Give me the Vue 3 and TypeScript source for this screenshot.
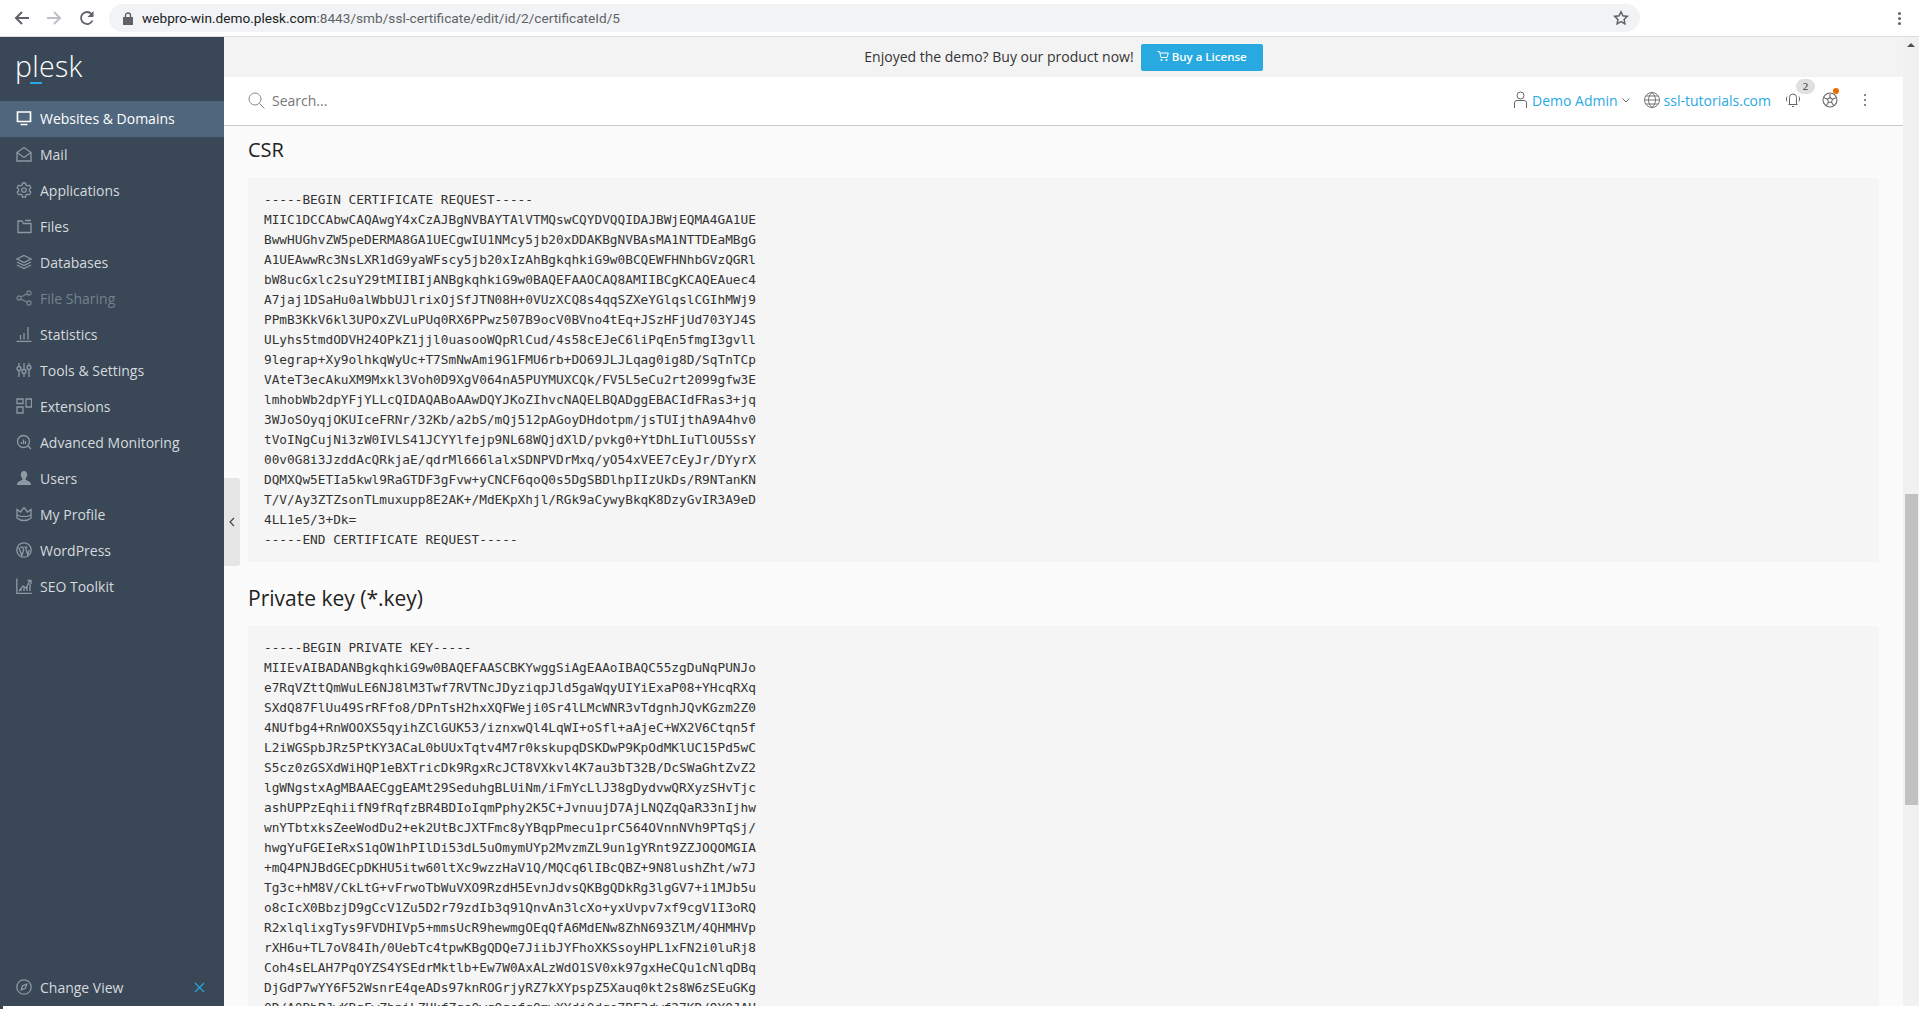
<script setup lang="ts">
interface NavItem { label: string; d: string; fill?: boolean; active?: boolean; dim?: boolean }

const nav: NavItem[] = [
  { label: 'Websites & Domains', active: true, d: 'M1.500 2h13v9.500h-13z M4.500 14.500h7' },
  { label: 'Mail', d: 'M1 6.500L8 1.500l7 5V15H1z M1 6.500l7 5 7-5' },
  { label: 'Applications', d: 'M6.500 1h3l.4 2 1.600.9 1.900-.7 1.500 2.600-1.500 1.300v1.800l1.500 1.300-1.500 2.600-1.900-.7-1.600.9-.4 2h-3l-.4-2-1.600-.9-1.900.7-1.500-2.600 1.500-1.300V7.100L1.100 5.800l1.500-2.600 1.900.7 1.600-.9z M8 5.800a2.200 2.200 0 1 0 0 4.400a2.200 2.200 0 1 0 0-4.400z' },
  { label: 'Files', d: 'M2 3h4l1.500 2.500H15V14.500H2z M9 2.500h6' },
  { label: 'Databases', d: 'M8 1.500l7 3.500-7 3.500-7-3.500z M1 8l7 3.500L15 8 M1 11l7 3.500 7-3.500' },
  { label: 'File Sharing', dim: true, d: 'M4.500 7.200l6.800-3.600 M4.500 8.800l6.800 3.600 M3 6a2 2 0 1 0 0 4a2 2 0 1 0 0-4z M13 1a2 2 0 1 0 0 4a2 2 0 1 0 0-4z M13 11a2 2 0 1 0 0 4a2 2 0 1 0 0-4z' },
  { label: 'Statistics', d: 'M.5 15.500h15 M4.500 9v4.500 M8 7v6.500 M12 1v12.500' },
  { label: 'Tools & Settings', d: 'M3 1v3.500 M3 8.500V15 M8 1v6.500 M8 11.500V15 M13 1v2.500 M13 7.500V15 M3 4.500a2 2 0 1 0 0 4a2 2 0 1 0 0-4z M8 7.500a2 2 0 1 0 0 4a2 2 0 1 0 0-4z M13 3.500a2 2 0 1 0 0 4a2 2 0 1 0 0-4z' },
  { label: 'Extensions', d: 'M1 1h6v4.500H1z M1 9h6v6H1z M10 1h5.500v8H10z' },
  { label: 'Advanced Monitoring', d: 'M7.500 1.500a6 6 0 1 0 0 12a6 6 0 1 0 0-12z M12 12l3 3 M5.500 10V8 M7.500 10V5.500 M9.500 10V7' },
  { label: 'Users', fill: true, d: 'M8 1a3.200 3.200 0 0 1 3.200 3.500c0 2-1 3.500-1.700 4.300 0 1 .7 1.500 2 2 1.800.7 3.500 1.500 3.500 4.200H1c0-2.700 1.700-3.500 3.500-4.200 1.300-.5 2-1 2-2C5.800 8 4.800 6.500 4.800 4.500A3.200 3.200 0 0 1 8 1z' },
  { label: 'My Profile', d: 'M1 3.500L4.500 6 8 1.500 11.500 6 15 3.500V12c-2 2-4.500 2.500-7 2.500S3 14 1 12z M1 9c4 2 10 2 14 0' },
  { label: 'WordPress', d: 'M8 .8a7.200 7.200 0 1 0 0 14.400a7.200 7.200 0 1 0 0-14.400z M2.800 5.500l3 8 1.900-5.500-1-2.500 M4 5.200h3.500 M8.500 5.200h3 M9.500 5.200l2.200 7.800 1.500-5' },
  { label: 'SEO Toolkit', d: 'M.8 .5v15h15 M3 13l4-5 3 2 4-7.500 M11.500 2.500H15V6 M5 13v-3 M8 13v-3.500 M11 13V8 M14 13V6' },
]

const csr = `-----BEGIN CERTIFICATE REQUEST-----
MIIC1DCCAbwCAQAwgY4xCzAJBgNVBAYTAlVTMQswCQYDVQQIDAJBWjEQMA4GA1UE
BwwHUGhvZW5peDERMA8GA1UECgwIU1NMcy5jb20xDDAKBgNVBAsMA1NTTDEaMBgG
A1UEAwwRc3NsLXR1dG9yaWFscy5jb20xIzAhBgkqhkiG9w0BCQEWFHNhbGVzQGRl
bW8ucGxlc2suY29tMIIBIjANBgkqhkiG9w0BAQEFAAOCAQ8AMIIBCgKCAQEAuec4
A7jaj1DSaHu0alWbbUJlrixOjSfJTN08H+0VUzXCQ8s4qqSZXeYGlqslCGIhMWj9
PPmB3KkV6kl3UPOxZVLuPUq0RX6PPwz507B9ocV0BVno4tEq+JSzHFjUd703YJ4S
ULyhs5tmdODVH24OPkZ1jjl0uasooWQpRlCud/4s58cEJeC6liPqEn5fmgI3gvll
9legrap+Xy9olhkqWyUc+T7SmNwAmi9G1FMU6rb+DO69JLJLqag0ig8D/SqTnTCp
VAteT3ecAkuXM9Mxkl3Voh0D9XgV064nA5PUYMUXCQk/FV5L5eCu2rt2099gfw3E
lmhobWb2dpYFjYLLcQIDAQABoAAwDQYJKoZIhvcNAQELBQADggEBACIdFRas3+jq
3WJoSOyqjOKUIceFRNr/32Kb/a2bS/mQj512pAGoyDHdotpm/jsTUIjthA9A4hv0
tVoINgCujNi3zW0IVLS41JCYYlfejp9NL68WQjdXlD/pvkg0+YtDhLIuTlOU5SsY
00v0G8i3JzddAcQRkjaE/qdrMl666lalxSDNPVDrMxq/yO54xVEE7cEyJr/DYyrX
DQMXQw5ETIa5kwl9RaGTDF3gFvw+yCNCF6qoQ0s5DgSBDlhpIIzUkDs/R9NTanKN
T/V/Ay3ZTZsonTLmuxupp8E2AK+/MdEKpXhjl/RGk9aCywyBkqK8DzyGvIR3A9eD
4LL1e5/3+Dk=
-----END CERTIFICATE REQUEST-----`

const key = `-----BEGIN PRIVATE KEY-----
MIIEvAIBADANBgkqhkiG9w0BAQEFAASCBKYwggSiAgEAAoIBAQC55zgDuNqPUNJo
e7RqVZttQmWuLE6NJ8lM3Twf7RVTNcJDyziqpJld5gaWqyUIYiExaP08+YHcqRXq
SXdQ87FlUu49SrRFfo8/DPnTsH2hxXQFWeji0Sr4lLMcWNR3vTdgnhJQvKGzm2Z0
4NUfbg4+RnWOOXS5qyihZClGUK53/iznxwQl4LqWI+oSfl+aAjeC+WX2V6Ctqn5f
L2iWGSpbJRz5PtKY3ACaL0bUUxTqtv4M7r0kskupqDSKDwP9KpOdMKlUC15Pd5wC
S5cz0zGSXdWiHQP1eBXTricDk9RgxRcJCT8VXkvl4K7au3bT32B/DcSWaGhtZvZ2
lgWNgstxAgMBAAECggEAMt29SeduhgBLUiNm/iFmYcLlJ38gDydvwQRXyzSHvTjc
ashUPPzEqhiifN9fRqfzBR4BDIoIqmPphy2K5C+JvnuujD7AjLNQZqQaR33nIjhw
wnYTbtxksZeeWodDu2+ek2UtBcJXTFmc8yYBqpPmecu1prC564OVnnNVh9PTqSj/
hwgYuFGEIeRxS1qOW1hPIlDi53dL5uOmymUYp2MvzmZL9un1gYRnt9ZZJOQOMGIA
+mQ4PNJBdGECpDKHU5itw60ltXc9wzzHaV1Q/MQCq6lIBcQBZ+9N8lushZht/w7J
Tg3c+hM8V/CkLtG+vFrwoTbWuVXO9RzdH5EvnJdvsQKBgQDkRg3lgGV7+i1MJb5u
o8cIcX0BbzjD9gCcV1Zu5D2r79zdIb3q91QnvAn3lcXo+yxUvpv7xf9cgV1I3oRQ
R2xlqlixgTys9FVDHIVp5+mmsUcR9hewmgOEqQfA6MdENw8ZhN693ZlM/4QHMHVp
rXH6u+TL7oV84Ih/0UebTc4tpwKBgQDQe7JiibJYFhoXKSsoyHPL1xFN2i0luRj8
Coh4sELAH7PqOYZS4YSEdrMktlb+Ew7W0AxALzWdO1SV0xk97gxHeCQu1cNlqDBq
DjGdP7wYY6F52WsnrE4qeADs97knROGrjyRZ7kXYpspZ5Xauq0kt2s8W6zSEuGKg
0D/A0BbPJwKBgFwZhniLZUkfZqsOwqOqsfqOmwXYdj0dqe7BE3dwf27KD/9YOJAH`
</script>

<template>
  <div class="window">
    <header class="chrome">
      <svg class="c-back" width="16" height="16" viewBox="0 0 16 16"><path d="M15 8H2M8 2L2 8l6 6" fill="none" stroke="#5f6368" stroke-width="2" /></svg>
      <svg class="c-fwd" width="16" height="16" viewBox="0 0 16 16"><path d="M1 8h13M8 2l6 6-6 6" fill="none" stroke="#bdc1c6" stroke-width="2" /></svg>
      <svg class="c-reload" width="16" height="16" viewBox="0 0 16 16"><path d="M13.500 10.500A6 6 0 1 1 12.500 4" fill="none" stroke="#5f6368" stroke-width="1.800" /><path d="M14.500 1v6h-6z" fill="#5f6368" /></svg>
      <div class="omnibox">
        <svg class="lock" width="10" height="13" viewBox="0 0 10 13"><path d="M0 5h10v8H0z" fill="#5f6368" /><path d="M2.500 5V3.500a2.500 2.500 0 0 1 5 0V5" fill="none" stroke="#5f6368" stroke-width="1.400" /></svg>
        <span class="url"><span class="host">webpro-win.demo.plesk.com</span>:8443/smb/ssl-certificate/edit/id/2/certificateId/5</span>
        <svg class="star" width="16" height="16" viewBox="0 0 16 16"><path d="M8 1.800l1.900 4 4.400.6-3.200 3 .8 4.400L8 11.700l-3.900 2.100.8-4.400-3.200-3 4.400-.6z" fill="none" stroke="#5f6368" stroke-width="1.500" /></svg>
      </div>
      <div class="c-menu"><i></i><i></i><i></i></div>
    </header>

    <div class="body">
      <aside class="sidebar">
        <div class="logo"><span>p<span class="logo-l">l</span>esk</span></div>
        <nav class="nav">
          <a v-for="item in nav" :key="item.label" class="nav-item" :class="{ active: item.active, dim: item.dim }">
            <svg class="nav-icon" width="16" height="16" viewBox="0 0 16 16"><path :d="item.d" :class="item.fill ? 'filled' : 'stroked'" /></svg>
            <span>{{ item.label }}</span>
          </a>
        </nav>
        <div class="change-view">
          <svg class="nav-icon" width="16" height="16" viewBox="0 0 16 16"><path class="stroked" d="M8 .8a7.200 7.200 0 1 0 0 14.400a7.200 7.200 0 1 0 0-14.400z M5.200 10.800l1.500-4.100 4.100-1.500-1.500 4.100z" /></svg>
          <span>Change View</span>
          <svg class="pin" width="11" height="11" viewBox="0 0 11 11"><path d="M1 1l9 9M10 1l-9 9" fill="none" stroke="#28aae1" stroke-width="1.100" /></svg>
        </div>
      </aside>

      <main class="main">
        <button class="collapser" type="button" aria-label="Collapse">
          <svg width="6" height="10" viewBox="0 0 6 10"><path d="M5 1L1 5l4 4" fill="none" stroke="#444" stroke-width="1.200" /></svg>
        </button>
        <div class="banner">
          <span class="banner-text">Enjoyed the demo? Buy our product now!</span>
          <a class="buy">
            <svg width="12" height="12" viewBox="0 0 12 12"><path d="M.5 1.500h2l1.500 6h6l1.300-4.500H3" fill="none" stroke="#fff" stroke-width="1" /><circle cx="4.500" cy="10" r="1" fill="#fff" /><circle cx="9.500" cy="10" r="1" fill="#fff" /></svg>
            Buy a License
          </a>
        </div>
        <div class="searchbar">
          <svg class="s-icon" width="17" height="17" viewBox="0 0 17 17"><path d="M7 1a6 6 0 1 0 0 12A6 6 0 1 0 7 1zM11.500 11.500l5 5" fill="none" stroke="#8a8a8a" stroke-width="1" /></svg>
          <span class="s-text">Search...</span>
          <div class="tools">
            <svg class="t-person" width="13" height="18" viewBox="0 0 13 18"><path d="M6.500 1a3.500 3.500 0 1 0 0 7a3.500 3.500 0 1 0 0-7zM.5 17v-5c0-1.500 1-2.500 2.500-2.500h7c1.500 0 2.500 1 2.500 2.500v5" fill="none" stroke="#666" stroke-width="1" /></svg>
            <a class="link">Demo Admin</a>
            <svg class="t-chev" width="8" height="5" viewBox="0 0 8 5"><path d="M.5 .5L4 4 7.500 .5" fill="none" stroke="#666" stroke-width="1" /></svg>
            <svg class="t-globe" width="16" height="16" viewBox="0 0 16 16"><path d="M8 .5a7.500 7.500 0 1 0 0 15a7.500 7.500 0 1 0 0-15zM8 .5C5.500 3 4.500 5.500 4.500 8s1 5 3.500 7.500M8 .5c2.500 2.500 3.500 5 3.500 7.500s-1 5-3.500 7.500M2 4h12M2 12h12M.5 8h15" fill="none" stroke="#666" stroke-width=".9" /></svg>
            <a class="link">ssl-tutorials.com</a>
            <div class="t-bell">
              <svg width="16" height="16" viewBox="0 0 16 16"><path d="M4.500 12.500V5.500a3.500 3.500 0 0 1 7 0v7M3.500 12.500h9M7 14.500h2M2 4.500C1.300 6 1.300 8 2 9.500M14 4.500c.7 1.500.7 3.500 0 5" fill="none" stroke="#666" stroke-width="1" /></svg>
              <span class="badge">2</span>
            </div>
            <div class="t-ball">
              <svg width="16" height="16" viewBox="0 0 16 16"><path d="M8 1a7 7 0 1 0 0 14A7 7 0 1 0 8 1zM8 5.500l2.500 1.800-1 3h-3l-1-3zM8 5.500V2M10.500 7.300l3.500-1.500M9.500 10.300l2 3M6.500 10.300l-2 3M5.500 7.300L2 5.800" fill="none" stroke="#666" stroke-width="1.100" /></svg>
              <i class="dot"></i>
            </div>
            <div class="t-kebab"><i></i><i></i><i></i></div>
          </div>
        </div>
        <div class="content">
          <h2 class="title csr-title">CSR</h2>
          <pre class="code">{{ csr }}</pre>
          <h2 class="title second">Private key (*.key)</h2>
          <pre class="code">{{ key }}</pre>
        </div>
      </main>

      <div class="scrollbar">
        <i class="up"></i>
        <i class="thumb"></i>
      </div>
    </div>
    <div class="bottom"></div>
  </div>
</template>

<style scoped>
.window {
  width: 1919px;
  height: 1009px;
  display: flex;
  flex-direction: column;
  overflow: hidden;
  background: #fff;
  font-family: "Open Sans", "Liberation Sans", sans-serif;
  font-size: 14px;
  color: #222;
}
.chrome {
  flex: none;
  height: 36px;
  display: flex;
  align-items: center;
  background: #fff;
  border-bottom: 1px solid #dadce0;
  box-sizing: content-box;
}
.c-back { margin-left: 14px; }
.c-fwd { margin-left: 16px; }
.c-reload { margin-left: 17px; }
.omnibox {
  margin-left: 14px;
  width: 1531px;
  height: 28px;
  border-radius: 14px;
  background: #f1f3f4;
  display: flex;
  align-items: center;
}
.lock { margin-left: 14px; }
.url {
  margin-left: 9px;
  font-family: "Roboto", "Liberation Sans", sans-serif;
  font-size: 13.650px;
  color: #5f6368;
  white-space: nowrap;
}
.host { color: #202124; }
.star { margin-left: auto; margin-right: 11px; }
.c-menu {
  margin-left: 258px;
  display: flex;
  flex-direction: column;
  gap: 2px;
}
.c-menu i {
  display: block;
  width: 3px;
  height: 3px;
  border-radius: 50%;
  background: #5f6368;
}
.body {
  flex: 1;
  min-height: 0;
  display: flex;
}
.sidebar {
  flex: none;
  width: 224px;
  display: flex;
  flex-direction: column;
  background: #394756;
  color: #d6dadf;
}
.logo {
  height: 64px;
  padding: 0 0 7px 15px;
  box-sizing: border-box;
  display: flex;
  align-items: center;
  font-family: "Open Sans", sans-serif;
  font-weight: 300;
  font-size: 28.500px;
  letter-spacing: .3px;
  color: #fff;
}
.logo-l {
  position: relative;
}
.logo-l::after {
  content: "";
  position: absolute;
  left: -2px;
  bottom: 1px;
  width: 12px;
  height: 2px;
  background: #28aae1;
}
.nav { display: flex; flex-direction: column; }
.nav-item {
  height: 36px;
  box-sizing: border-box;
  display: flex;
  align-items: center;
  gap: 8px;
  padding: 0 0 2px 16px;
}
.nav-item.active { background: #50667c; color: #fff; }
.nav-item.dim { color: #76828e; }
.nav-icon { flex: none; color: #8f99a4; }
.active .nav-icon { color: #fff; }
.dim .nav-icon { color: #76828e; }
.stroked { fill: none; stroke: currentColor; stroke-width: 1.300; }
.active .stroked { stroke-width: 1.700; }
.filled { fill: currentColor; }
.change-view {
  margin-top: auto;
  height: 36px;
  box-sizing: border-box;
  display: flex;
  align-items: center;
  gap: 8px;
  padding: 0 0 2px 16px;
}
.pin { margin-left: auto; margin-right: 19px; }
.main {
  flex: 1;
  min-width: 0;
  position: relative;
  display: flex;
  flex-direction: column;
  background: #fbfbfb;
  overflow: hidden;
}
.collapser {
  position: absolute;
  left: 0;
  top: 441px;
  width: 16px;
  height: 88px;
  padding: 0;
  border: 0;
  border-radius: 0 3px 3px 0;
  background: #e6e6e6;
  display: flex;
  align-items: center;
  justify-content: center;
}
.banner {
  flex: none;
  height: 40px;
  background: #f3f3f3;
  display: flex;
  align-items: center;
  justify-content: center;
  gap: 7px;
  color: #333;
}
.banner-text { padding-bottom: 2px; }
.buy {
  width: 122px;
  height: 27px;
  box-sizing: border-box;
  padding-bottom: 2px;
  display: flex;
  align-items: center;
  justify-content: center;
  gap: 3px;
  background: #28aae1;
  border-radius: 2px;
  color: #fff;
  font-size: 11.500px;
  font-weight: 600;
}
.searchbar {
  flex: none;
  height: 49px;
  box-sizing: border-box;
  background: #fff;
  border-bottom: 1px solid #c8c8c8;
  display: flex;
  align-items: center;
  padding: 0 0 2px 24px;
}
.s-text { margin-left: 7px; color: #777; font-size: 14px; }
.tools { margin-left: auto; display: flex; align-items: center; }
.t-person { margin-right: 5px; }
.link { color: #28aae1; }
.t-chev { margin: 1px 0 0 4px; }
.t-globe { margin-left: 14px; margin-right: 4px; }
.t-bell { position: relative; margin-left: 14px; height: 16px; }
.badge {
  position: absolute;
  left: 11px;
  top: -13px;
  width: 19px;
  height: 15px;
  border-radius: 8px;
  background: #e0e0e0;
  font-family: "Liberation Serif", serif;
  font-size: 11px;
  line-height: 15px;
  text-align: center;
  color: #333;
}
.t-ball { position: relative; margin-left: 21px; height: 16px; }
.dot {
  position: absolute;
  left: 11px;
  top: -4px;
  width: 6px;
  height: 6px;
  border-radius: 50%;
  background: #e86c00;
}
.t-kebab {
  margin: 0 37px 0 26px;
  display: flex;
  flex-direction: column;
  gap: 3px;
}
.t-kebab i {
  display: block;
  width: 2px;
  height: 2px;
  background: #8a8a8a;
}
.content {
  flex: 1;
  min-height: 0;
  padding: 10px 24px 0 24px;
  overflow: hidden;
}
.title {
  margin: 0 0 14px;
  font-size: 21px;
  font-weight: 400;
  line-height: 28px;
  color: #222;
}
.csr-title { font-size: 20px; }
.second { margin-top: 22px; }
.code {
  margin: 0;
  padding: 12px 16px;
  background: #f5f5f5;
  font-family: "DejaVu Sans Mono", "Liberation Mono", monospace;
  font-size: 12.780px;
  line-height: 20px;
  color: #333;
}
.scrollbar {
  flex: none;
  width: 16px;
  background: #f1f1f1;
  position: relative;
}
.up {
  position: absolute;
  left: 4px;
  top: 6px;
  width: 0;
  height: 0;
  border-left: 4px solid transparent;
  border-right: 4px solid transparent;
  border-bottom: 4px solid #505050;
}
.thumb {
  position: absolute;
  left: 2px;
  top: 457px;
  width: 13px;
  height: 311px;
  background: #c1c1c1;
}
.bottom {
  flex: none;
  height: 3px;
  background: #fff;
  border-left: 3px solid #394756;
}
</style>
